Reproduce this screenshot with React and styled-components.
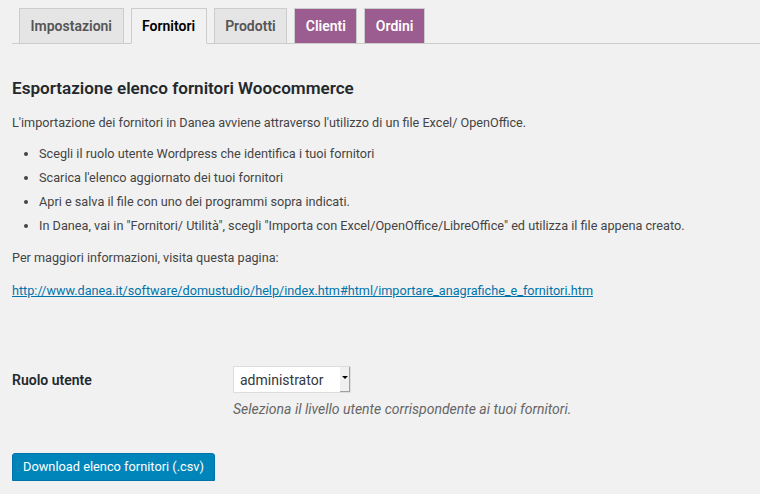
import React from "react";
import styled, { createGlobalStyle } from "styled-components";

const GlobalStyle = createGlobalStyle`
  body {
    margin: 0;
    background: #f1f1f1;
    color: #444;
    font-family: Roboto, "Noto Sans", sans-serif;
    font-size: 13px;
    line-height: 1.4em;
  }
`;

const Page = styled.div`
  padding: 8px 0 0 12px;
`;

const TabBar = styled.nav`
  display: flex;
  border-bottom: 1px solid #ccc;
`;

const Tab = styled.a`
  display: block;
  margin-left: 7px;
  margin-bottom: -1px;
  padding: 5px 10.5px;
  font-size: 14px;
  font-weight: 600;
  line-height: 24px;
  text-decoration: none;
  border: 1px solid #ccc;
  border-bottom: 1px solid ${(p) => (p.$active ? "#f1f1f1" : "#ccc")};
  background: ${(p) => (p.$purple ? "#9b5c8f" : p.$active ? "#f1f1f1" : "#e5e5e5")};
  color: ${(p) => (p.$purple ? "#fff" : p.$active ? "#000" : "#555")};
`;

const Heading = styled.h2`
  margin: 32px 0 0;
  font-size: 17.1px;
  font-weight: 600;
  line-height: 24px;
  color: #23282d;
`;

const Para = styled.p`
  margin: ${(p) => p.$gap || 13}px 0 0;
  font-size: 12.65px;
  line-height: 19px;
`;

const List = styled.ul`
  margin: 13px 0 0;
  padding: 0 0 0 27px;
  list-style: disc;
  font-size: 12.7px;
`;

const Item = styled.li`
  margin-bottom: 6px;
  line-height: 18px;
`;

const Link = styled.a`
  color: #0073aa;
  text-decoration: underline;
`;

const FormRow = styled.div`
  display: flex;
  margin-top: 66px;
`;

const Label = styled.div`
  width: 221px;
  flex-shrink: 0;
  padding-top: 5px;
  font-size: 14px;
  font-weight: 600;
  color: #23282d;
`;

const Field = styled.div`
  display: flex;
  flex-direction: column;
  align-items: flex-start;
`;

const SelectWrap = styled.div`
  position: relative;
  width: 118px;
  height: 27px;
`;

const Select = styled.select`
  appearance: none;
  width: 100%;
  height: 100%;
  margin: 0;
  padding: 0 0 0 6px;
  border: 1px solid #ddd;
  background: #fff;
  color: #32373c;
  font-family: Roboto, "Noto Sans", sans-serif;
  font-size: 14px;
  outline: none;
`;

const Arrow = styled.span`
  position: absolute;
  top: 1px;
  right: 1px;
  width: 9px;
  height: 24px;
  background: #f0f0f0;
  border-right: 1px solid #a0a0a0;
  border-bottom: 1px solid #a0a0a0;
  pointer-events: none;

  &::after {
    content: "";
    position: absolute;
    left: 2px;
    top: 9px;
    border-left: 3px solid transparent;
    border-right: 3px solid transparent;
    border-top: 3px solid #000;
  }
`;

const Description = styled.p`
  margin: 7px 0 0;
  font-size: 14px;
  font-style: italic;
  color: #666;
`;

const Button = styled.button`
  margin-top: 35px;
  height: 28px;
  padding: 0 10px 1px;
  border: 1px solid #0073aa;
  border-radius: 3px;
  background: #0085ba;
  box-shadow: 0 1px 0 #006799;
  color: #fff;
  font-family: Roboto, "Noto Sans", sans-serif;
  font-size: 12.8px;
  line-height: 26px;
`;

export default function App() {
  return (
    <Page>
      <GlobalStyle />
      <TabBar>
        <Tab href="#">Impostazioni</Tab>
        <Tab href="#" $active>Fornitori</Tab>
        <Tab href="#">Prodotti</Tab>
        <Tab href="#" $purple>Clienti</Tab>
        <Tab href="#" $purple>Ordini</Tab>
      </TabBar>
      <Heading>Esportazione elenco fornitori Woocommerce</Heading>
      <Para>
        L'importazione dei fornitori in Danea avviene attraverso l'utilizzo di un file Excel/ OpenOffice.
      </Para>
      <List>
        <Item>Scegli il ruolo utente Wordpress che identifica i tuoi fornitori</Item>
        <Item>Scarica l'elenco aggiornato dei tuoi fornitori</Item>
        <Item>Apri e salva il file con uno dei programmi sopra indicati.</Item>
        <Item>
          In Danea, vai in "Fornitori/ Utilità", scegli "Importa con Excel/OpenOffice/LibreOffice" ed utilizza il file appena creato.
        </Item>
      </List>
      <Para $gap={13}>Per maggiori informazioni, visita questa pagina:</Para>
      <Para $gap={14}>
        <Link href="#">
          http://www.danea.it/software/domustudio/help/index.htm#html/importare_anagrafiche_e_fornitori.htm
        </Link>
      </Para>
      <FormRow>
        <Label>Ruolo utente</Label>
        <Field>
          <SelectWrap>
            <Select defaultValue="administrator">
              <option value="administrator">administrator</option>
            </Select>
            <Arrow />
          </SelectWrap>
          <Description>Seleziona il livello utente corrispondente ai tuoi fornitori.</Description>
        </Field>
      </FormRow>
      <Button>Download elenco fornitori (.csv)</Button>
    </Page>
  );
}
